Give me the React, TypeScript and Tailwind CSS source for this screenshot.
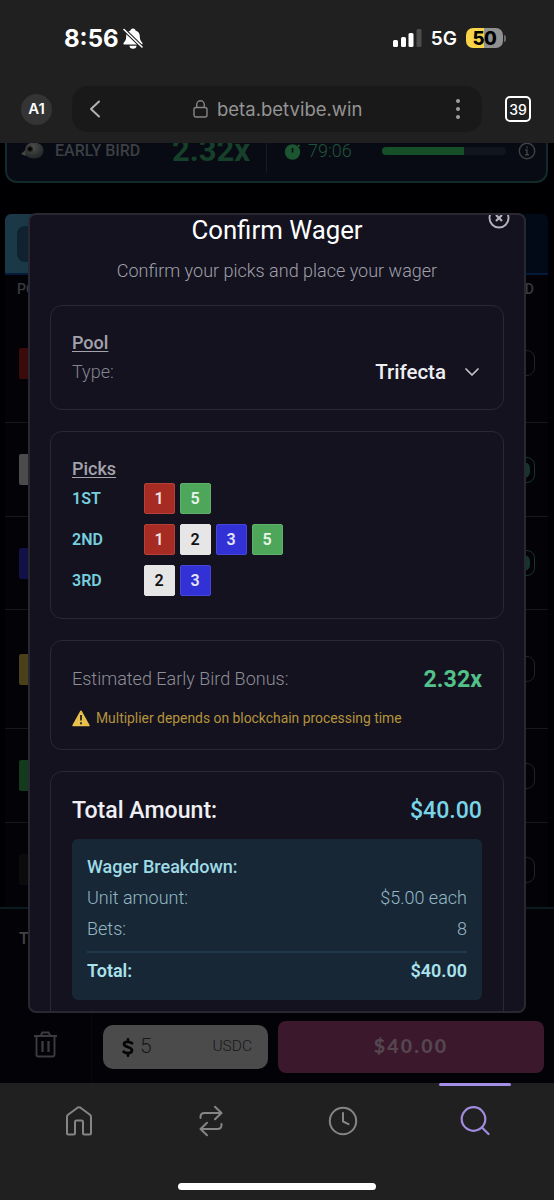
import type { ReactNode } from "react";

const chipColors: Record<string, string> = {
  "1": "bg-[#a52b23] border-[#b5403a] text-[#f0e4e4]",
  "2": "bg-[#e6e6e7] border-[#e6e6e7] text-[#111111]",
  "3": "bg-[#3231d6] border-[#4746d8] text-[#e4e4fa]",
  "5": "bg-[#4ea65b] border-[#5fb06b] text-[#e6f5e8]",
};

const picks = [
  { place: "1ST", horses: ["1", "5"] },
  { place: "2ND", horses: ["1", "2", "3", "5"] },
  { place: "3RD", horses: ["2", "3"] },
];

const rows = [
  { height: "h-[119px]", color: "bg-[#3a0b0a]", checked: false },
  { height: "h-[94px]", color: "bg-[#4c4b4c]", checked: true },
  { height: "h-[93px]", color: "bg-[#111148]", checked: true },
  { height: "h-[119px]", color: "bg-[#4a401a]", checked: false },
  { height: "h-[94px]", color: "bg-[#143a1d]", checked: false },
  { height: "h-[94px]", color: "bg-[#0b0b0b]", checked: false },
];

const Card = ({ children, className = "" }: { children: ReactNode; className?: string }) => (
  <div className={`rounded-xl border border-[#292834] px-[21px] ${className}`}>{children}</div>
);

const StatusBar = () => (
  <div className="flex h-[76px] items-center justify-between pl-16 pr-[48px] text-white">
    <div className="flex items-center gap-[5px]">
      <span className="w-[54px] whitespace-nowrap pt-px font-[Inter] text-[24px] font-bold leading-none">8:56</span>
      <svg width="20" height="21" viewBox="0 0 20 21" fill="none">
        <path
          d="M10 .5c-1.400 0-2.200.8-2.500 1.900C4.400 3.500 3.200 5.600 3.200 8.200c0 3.400-.8 4.600-2.300 6.200-.8.9-.5 2.100.7 2.100h16.800c1.200 0 1.500-1.200.7-2.100-1.500-1.600-2.300-2.800-2.300-6.200 0-2.600-1.200-4.700-4.300-5.800C12.200 1.300 11.400.5 10 .5z"
          fill="white"
        />
        <path d="M6.500 17.700h7a3.500 3 0 0 1-7 0z" fill="white" />
        <path d="M1 1.500l18 17.500" stroke="#202020" strokeWidth="3.600" />
        <path d="M1 1.500l18 17.500" stroke="white" strokeWidth="1.600" strokeLinecap="round" />
      </svg>
    </div>
    <div className="flex items-center">
      <svg width="29" height="18" viewBox="0 0 29 18">
        <rect x="0" y="11" width="5" height="7" rx="1.500" fill="white" />
        <rect x="8" y="8" width="5" height="10" rx="1.500" fill="white" />
        <rect x="15.500" y="4" width="5" height="14" rx="1.500" fill="white" />
        <rect x="23.500" y="0" width="5" height="18" rx="1.500" fill="#4d4d4d" />
      </svg>
      <span className="ml-[9px] pt-px font-[Inter] text-[19px] font-semibold leading-none">5G</span>
      <div className="ml-[9px] flex h-5 w-[37px] items-center justify-center rounded-[7px] bg-linear-to-r from-[#f7d448] from-50% to-[#909090] to-50% font-[Inter] text-[18.500px] font-extrabold leading-none tracking-[-0.5px] text-black">
        50
      </div>
      <div className="ml-[1px] h-[7px] w-[2px] rounded-r-full bg-[#6a6a6a]"></div>
    </div>
  </div>
);

const AddressBar = () => (
  <div className="flex h-[67px] items-start pl-[21px] pt-[10px]">
    <div className="mt-[8px] flex size-[31px] items-center justify-center rounded-full bg-[#343434] font-[Inter] text-[15px] font-semibold text-white">
      A1
    </div>
    <div className="ml-5 flex h-[46px] w-[410px] items-center rounded-2xl bg-[#191919] text-[#949494]">
      <svg className="ml-[17px]" width="12" height="18" viewBox="0 0 12 18" fill="none">
        <path d="M10 1.500L2 9l8 7.500" stroke="#b2b2b2" strokeWidth="2" strokeLinecap="round" strokeLinejoin="round" />
      </svg>
      <svg className="ml-[92px]" width="15" height="18" viewBox="0 0 15 18" fill="none" stroke="#858585" strokeWidth="1.400">
        <rect x="1" y="7.500" width="13" height="9.500" rx="2" />
        <path d="M3.700 7.500V4.600a3.800 3.800 0 0 1 7.600 0v2.900" />
      </svg>
      <span className="ml-[9px] w-[145px] whitespace-nowrap pt-[2px] font-[Inter] text-[18.500px]">beta.betvibe.win</span>
      <div className="ml-[94px] flex flex-col gap-1">
        <div className="size-1 rounded-full bg-[#a0a0a0]"></div>
        <div className="size-1 rounded-full bg-[#a0a0a0]"></div>
        <div className="size-1 rounded-full bg-[#a0a0a0]"></div>
      </div>
    </div>
    <div className="ml-[23px] mt-[10px] flex size-[26px] items-center justify-center rounded-[5px] border-2 border-white font-[Inter] text-[14px] font-medium text-white">
      39
    </div>
  </div>
);

const EarlyBird = () => (
  <div className="-mt-[25px] ml-[5px] flex h-[65px] w-[543px] items-center rounded-xl border-2 border-[#122a29] bg-[#080b13] pl-[11px]">
    <svg width="26" height="20" viewBox="0 0 26 20">
      <defs>
        <radialGradient id="bird" cx="0.4" cy="0.3" r="0.8">
          <stop offset="0" stopColor="#4d4d4d" />
          <stop offset="1" stopColor="#1e2222" />
        </radialGradient>
      </defs>
      <path d="M8 8.500L3 13l5 2z" fill="#494744" />
      <path d="M7 9C7.500 3.500 11 1.500 15.500 1.500c5.500 0 10 3 10 8 0 5-4 8-9 8-6 0-10-3-9.500-8.500z" fill="url(#bird)" />
      <circle cx="12" cy="8" r="3" fill="#28231e" />
      <circle cx="12" cy="8" r="1.700" fill="#000" />
    </svg>
    <span className="ml-[11px] w-[87px] whitespace-nowrap text-[16px] font-medium text-[#3c3f44]">EARLY BIRD</span>
    <span className="ml-[30px] w-[79px] text-[31px] font-bold leading-none text-[#16402a]">2.32x</span>
    <div className="ml-[15px] h-11 w-px bg-[#171c22]"></div>
    <svg className="ml-[17px]" width="17" height="19" viewBox="0 0 17 19">
      <path d="M6 1h5" stroke="#1b5630" strokeWidth="2" />
      <circle cx="8.500" cy="11" r="7.700" fill="#1b5630" />
      <path d="M14 4l1.500 1.500" stroke="#1b5630" strokeWidth="2" />
      <path d="M8.500 7v4.500" stroke="#080b13" strokeWidth="1.600" />
    </svg>
    <span className="ml-[7px] w-[44px] text-[18px] font-light leading-none text-[#20543a]">79:06</span>
    <div className="ml-[30px] h-2 w-[124px] rounded-full bg-[#101520]">
      <div className="h-2 w-[82px] rounded-l-full bg-[#165028]"></div>
    </div>
    <svg className="ml-3" width="18" height="18" viewBox="0 0 18 18" fill="none" stroke="#404247" strokeWidth="1.400">
      <circle cx="9" cy="9" r="7.700" />
      <path d="M9 4.500v1.800M7.300 8H9v4.500M7 12.700h4" />
    </svg>
  </div>
);

const RaceTable = () => (
  <div className="ml-[5px] mt-[31px] w-[543px] overflow-hidden rounded-md bg-[#030307]">
    <div className="flex h-[61px] items-center border-b-2 border-[#051a3a] bg-linear-to-r from-[#1a3846] from-5% to-[#020a18] to-60% pl-3">
      <div className="h-9 w-24 rounded-lg bg-[#10222f]"></div>
    </div>
    <div className="flex h-[29px] items-center justify-between pl-3 pr-[14px] text-[14px] font-medium text-[#3a3a3d]">
      <span>PO</span>
      <span>D</span>
    </div>
    {rows.map((row, i) => (
      <div
        key={i}
        className={`flex shrink-0 items-center justify-between border-b border-[#18181c] pl-[14px] pr-[13px] ${row.height}`}
      >
        <div className={`size-[31px] rounded-xs ${row.color}`}></div>
        <div
          className={`flex h-[26px] w-[26px] items-center justify-center rounded-lg border ${
            row.checked ? "border-[#16352f]" : "border-[#232326]"
          }`}
        >
          {row.checked && <div className="size-4 rounded-md bg-[#14342c]"></div>}
        </div>
      </div>
    ))}
  </div>
);

const BetFooter = () => (
  <div className="h-[176px] border-t-2 border-[#0a1b1f] bg-[#030307]">
    <div className="flex h-[102px] items-start pl-[19px] pt-[18px] text-[16px] font-medium text-[#424246]">T</div>
    <div className="flex h-[72px] items-center">
      <svg className="-mt-[5px] ml-[34px]" width="23" height="27" viewBox="0 0 23 27" fill="none" stroke="#3c3c3f" strokeWidth="1.900">
        <path d="M0 5h23M6.500 5l2-3.500h6l2 3.500M2.500 5v18.500q0 2 2 2h14q2 0 2-2V5" />
        <path d="M8.500 10v11M14.500 10v11" strokeWidth="2.300" />
      </svg>
      <div className="ml-[34px] h-full w-px bg-[#08080c]"></div>
      <div className="ml-[11px] flex h-11 w-[165px] items-center rounded-[10px] bg-[#4b4b4b] pl-[19px] pr-4 text-[#181818]">
        <svg width="12" height="19" viewBox="0 0 12 19" fill="none" stroke="#050505" strokeWidth="2.700" strokeLinecap="round">
          <path d="M10 5.200C8.500 3.700 2 2.700 2 6.300c0 3.200 8 2.200 8 6 0 3.700-6.500 3.200-8.300 1.400M6 1.300v2M6 15.700v2" />
        </svg>
        <span className="ml-[6px] text-[21px] font-light">5</span>
        <span className="ml-auto text-[15.500px] font-light">USDC</span>
      </div>
      <div className="ml-[10px] flex h-[52px] w-[266px] items-center justify-center rounded-lg bg-[#3b182c] pb-[3px] font-[Lato] text-[19.500px] font-black tracking-[2.200px] text-[#55464f]">
        $40.00
      </div>
    </div>
  </div>
);

const WagerModal = () => (
  <div className="absolute left-[28px] top-[70px] h-[800px] w-[498px] overflow-hidden rounded-lg border-2 border-[#292832] bg-[#13121e] px-5">
    <svg className="absolute right-[14px] -top-[8px]" width="22" height="22" viewBox="0 0 22 22" fill="none" stroke="#b3b2bd" strokeWidth="1.900">
      <circle cx="11" cy="11" r="9.500" />
      <path d="M8 8l6 6M14 8l-6 6" strokeWidth="2.200" />
    </svg>
    <h2 className="text-center text-[25.800px] leading-[30px] text-white">Confirm Wager</h2>
    <p className="mt-[12px] h-[48px] text-center text-[18px] font-light leading-[27px] text-[#a0a0aa]">
      Confirm your picks and place your wager
    </p>

    <Card className="h-[105px] pt-[22px]">
      <h3 className="text-[18px] font-medium leading-[30px] text-[#a3a3ac] underline underline-offset-2">Pool</h3>
      <div className="flex h-[29px] items-center">
        <span className="pb-px text-[18px] font-light leading-[26px] text-[#85858f]">Type:</span>
        <span className="ml-auto text-[20.500px] font-medium text-[#eeeef2]">Trifecta</span>
        <svg className="ml-[19px] mr-[3px]" width="14" height="9" viewBox="0 0 14 9" fill="none">
          <path d="M1 1l6 6 6-6" stroke="#c5c5ca" strokeWidth="1.700" strokeLinecap="round" strokeLinejoin="round" />
        </svg>
      </div>
    </Card>

    <Card className="mt-[21px] h-[188px] pt-[22px]">
      <h3 className="h-[29px] text-[18px] font-medium leading-[30px] text-[#a3a3ac] underline underline-offset-2">Picks</h3>
      <div className="flex flex-col gap-[10px]">
        {picks.map((pick) => (
          <div key={pick.place} className="flex items-center">
            <span className="w-[71.500px] text-[16px] font-semibold text-[#76cfdf]">{pick.place}</span>
            <div className="flex gap-[5px]">
              {pick.horses.map((horse) => (
                <div
                  key={horse}
                  className={`flex size-[31px] items-center justify-center rounded-xs border text-[16px] font-semibold ${chipColors[horse]}`}
                >
                  {horse}
                </div>
              ))}
            </div>
          </div>
        ))}
      </div>
    </Card>

    <Card className="mt-[21px] h-[110px] pt-[19px]">
      <div className="flex h-9 items-center justify-between">
        <span className="text-[18px] font-light text-[#8e8e98]">Estimated Early Bird Bonus:</span>
        <span className="pt-[2px] text-[23.200px] font-bold text-[#52c18a]">2.32x</span>
      </div>
      <div className="mt-[10px] flex items-center text-[13.880px] leading-6 text-[#b5943c]">
        <svg className="mr-[6px]" width="18" height="17" viewBox="0 0 18 17">
          <path d="M9 1.200L17 15.500H1z" fill="#e8c04e" stroke="#e8c04e" strokeWidth="1.500" strokeLinejoin="round" />
          <path d="M9 5v5.500M9 12.300v2" stroke="#2a2416" strokeWidth="1.800" />
        </svg>
        <span>Multiplier depends on blockchain processing time</span>
      </div>
    </Card>

    <Card className="mt-[21px] h-[320px] pt-[21px]">
      <div className="flex h-9 items-center justify-between text-[23.100px] font-medium">
        <span className="text-[#efeff4]">Total Amount:</span>
        <span className="text-[#7ad4e8]">$40.00</span>
      </div>
      <div className="mt-[10px] h-[161px] rounded-md bg-[#182736] px-[15px] pt-[12px] text-[18px] font-light leading-[31px] text-[#93b8c4]">
        <p className="font-medium text-[#9fdbe6]">Wager Breakdown:</p>
        <div className="flex justify-between">
          <span>Unit amount:</span>
          <span>$5.00 each</span>
        </div>
        <div className="flex justify-between">
          <span>Bets:</span>
          <span>8</span>
        </div>
        <div className="mt-[7px] flex justify-between border-t-2 border-[#1f3b4b] pt-[2px] font-semibold text-[#a9e2ec]">
          <span>Total:</span>
          <span>$40.00</span>
        </div>
      </div>
    </Card>
  </div>
);

const BrowserNav = () => (
  <div className="h-[117px] bg-[#202020]">
    <div className="flex h-[75px] items-center">
      <div className="flex w-[158px] justify-center">
        <svg width="28" height="30" viewBox="0 0 28 30" fill="none" stroke="#858585" strokeWidth="2" strokeLinejoin="round">
          <path d="M2 11q0-1.500 1-2.300L12.500 1.700q1.500-1 3 0L25 8.700q1 .8 1 2.300v16q0 1.500-1.500 1.500h-5Q18 28.500 18 27V16q0-1.500-1.500-1.500h-5Q10 14.500 10 16v11q0 1.500-1.500 1.500h-5Q2 28.500 2 27z" />
        </svg>
      </div>
      <div className="flex w-[106px] justify-center">
        <svg width="24" height="32" viewBox="0 0 24 32" fill="none" stroke="#858585" strokeWidth="2" strokeLinecap="round" strokeLinejoin="round">
          <path d="M1.500 13v-1q0-4 4-4H22M16 1.700L22.500 8 16 14.300" />
          <path d="M22.500 19v1q0 4-4 4H2M8 17.700L1.500 24 8 30.300" />
        </svg>
      </div>
      <div className="flex w-[158px] justify-center">
        <svg width="30" height="30" viewBox="0 0 30 30" fill="none" stroke="#858585" strokeWidth="2" strokeLinecap="round" strokeLinejoin="round">
          <circle cx="15" cy="15" r="13.200" />
          <path d="M15 7v8.500l5.500 2.700" />
        </svg>
      </div>
      <div className="ml-[17px] flex h-full w-[72px] flex-col items-center">
        <div className="h-[3px] w-full rounded-full bg-[#a48fe6]"></div>
        <svg className="mt-[19px]" width="30" height="31" viewBox="0 0 30 31" fill="none" stroke="#a08bdc" strokeWidth="2.200" strokeLinecap="round">
          <circle cx="13.500" cy="14" r="11.800" />
          <path d="M22 22.500l6.500 6.500" />
        </svg>
      </div>
    </div>
    <div className="mx-auto mt-[25px] h-[7px] w-[198px] rounded-full bg-white"></div>
  </div>
);

export default function App() {
  return (
    <div className="h-[1200px] w-[554px] overflow-hidden bg-[#202020] font-[Roboto,sans-serif]">
      <StatusBar />
      <AddressBar />
      <main className="relative flex h-[940px] flex-col overflow-hidden bg-[#000002]">
        <div className="h-[764px] overflow-hidden">
          <EarlyBird />
          <RaceTable />
        </div>
        <BetFooter />
        <WagerModal />
      </main>
      <BrowserNav />
    </div>
  );
}
